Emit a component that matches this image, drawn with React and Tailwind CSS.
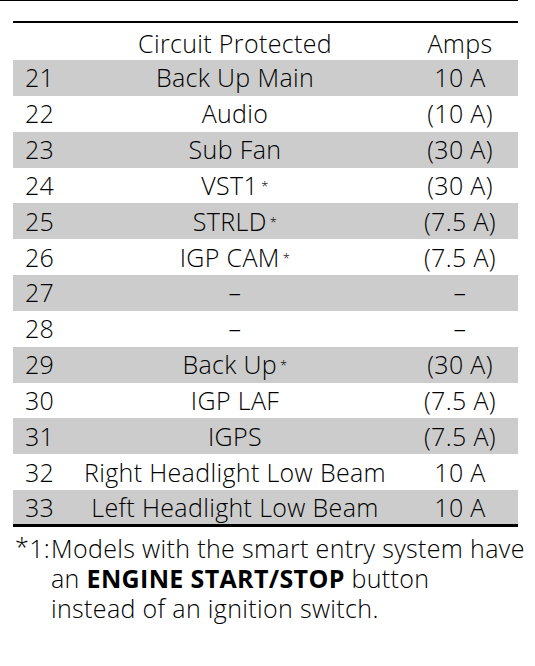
import React from 'react';

const rows = [
  ['21', 'Back Up Main', false, '10 A'],
  ['22', 'Audio', false, '(10 A)'],
  ['23', 'Sub Fan', false, '(30 A)'],
  ['24', 'VST1', true, '(30 A)'],
  ['25', 'STRLD', true, '(7.5 A)'],
  ['26', 'IGP CAM', true, '(7.5 A)'],
  ['27', '–', false, '–'],
  ['28', '–', false, '–'],
  ['29', 'Back Up', true, '(30 A)'],
  ['30', 'IGP LAF', false, '(7.5 A)'],
  ['31', 'IGPS', false, '(7.5 A)'],
  ['32', 'Right Headlight Low Beam', false, '10 A'],
  ['33', 'Left Headlight Low Beam', false, '10 A'],
];

export default function App() {
  return (
    <div
      className="w-[535px] h-[666px] bg-white text-black overflow-hidden font-[350] tracking-[0.35px]"
      style={{ fontFamily: '"Open Sans", "Noto Sans", sans-serif' }}
    >
      <div className="w-[518px] h-px bg-black" />

      <table className="ml-[13px] mt-[20px] w-[505px] table-fixed border-collapse border-t-2 border-b-[3px] border-black text-[25px] leading-none">
        <colgroup>
          <col className="w-[55px]" />
          <col className="w-[334px]" />
          <col className="w-[116px]" />
        </colgroup>
        <thead>
          <tr className="h-[38px]">
            <th />
            <th className="pt-1 text-center font-[350]">Circuit Protected</th>
            <th className="pt-1 text-center font-[350]">Amps</th>
          </tr>
        </thead>
        <tbody>
          {rows.map(([num, name, star, amps], i) => (
            <tr key={num} className={`h-[35.85px] ${i % 2 === 0 ? 'bg-[#cccccc]' : 'bg-white'}`}>
              <td className="pl-[12px] text-left">{num}</td>
              <td className="text-center whitespace-nowrap">
                {name}
                {star && <sup className="ml-[3px] text-[13px] relative -top-[4px]">*</sup>}
              </td>
              <td className="text-center whitespace-nowrap">{amps}</td>
            </tr>
          ))}
        </tbody>
      </table>

      <div className="mt-[6px] ml-[15px] flex text-[25px] leading-[30px] whitespace-nowrap">
        <span className="w-[36px] shrink-0">
          <span className="relative -top-[2px]">*</span>1:
        </span>
        <p>
          Models with the smart entry system have
          <br />
          an <b className="font-bold">ENGINE START/STOP</b> button
          <br />
          instead of an ignition switch.
        </p>
      </div>
    </div>
  );
}
